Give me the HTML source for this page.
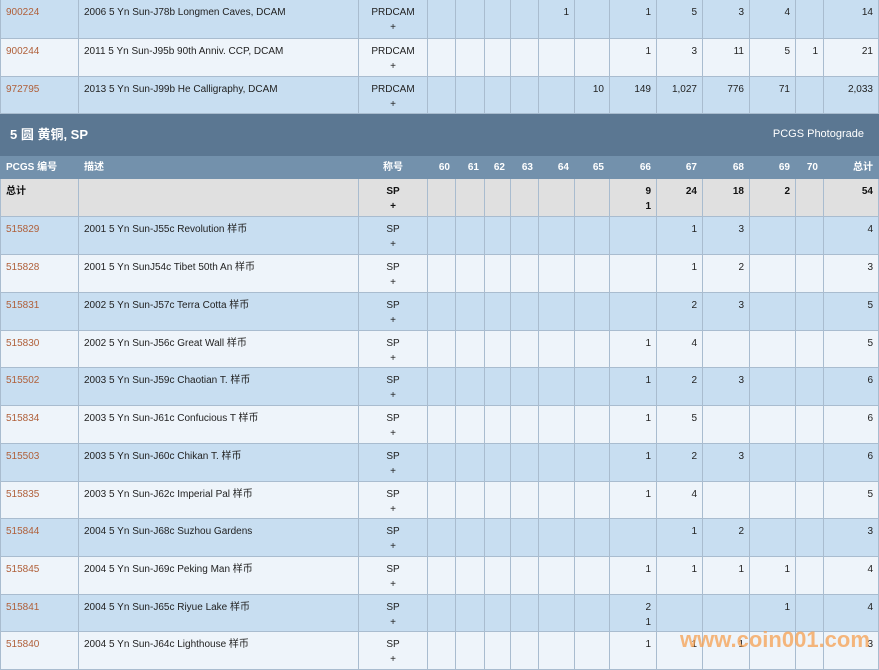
<!DOCTYPE html>
<html><head><meta charset="utf-8"><style>
body{margin:0;background:#fff;width:879px;height:670px;overflow:hidden;font-family:"Liberation Sans","Noto Sans CJK SC",sans-serif;font-size:10px;color:#222;position:relative}
table{border-collapse:collapse;table-layout:fixed;position:absolute;left:0;top:-1px;width:878px}
td{border:1px solid #a9bccf;vertical-align:top;padding:5px 5px 0 5px;line-height:15px;overflow:hidden;white-space:nowrap}
td.n{text-align:right}
td.g{text-align:center}
tr.b td{background:#c8def1}
tr.w td{background:#eef4fa}
tr.t td{background:#e0e0e0;font-weight:bold;color:#111}
a{color:#b0603a;text-decoration:none}
tr.sec td{background:#5b7792;color:#fff;border-color:#5b7792;vertical-align:middle;padding-top:0}
tr.hd td{background:#7391ac;color:#fff;font-weight:bold;border-color:#7391ac;vertical-align:middle;padding-top:0}
.wm{position:absolute;left:680px;top:627px;font:bold 22px "Liberation Sans",sans-serif;color:rgba(245,160,80,0.75);letter-spacing:0}
</style></head><body>
<table>
<colgroup><col style="width:78px"><col style="width:280px"><col style="width:69px"><col style="width:28px"><col style="width:29px"><col style="width:26px"><col style="width:28px"><col style="width:36px"><col style="width:35px"><col style="width:47px"><col style="width:46px"><col style="width:47px"><col style="width:46px"><col style="width:28px"><col style="width:55px"></colgroup>
<tr class="b" style="height:39px"><td><a>900224</a></td><td>2006 5 Yn Sun-J78b Longmen Caves, DCAM</td><td class="g">PRDCAM<br>+</td><td></td><td></td><td></td><td></td><td class="n">1</td><td></td><td class="n">1</td><td class="n">5</td><td class="n">3</td><td class="n">4</td><td></td><td class="n">14</td></tr>
<tr class="w" style="height:38px"><td><a>900244</a></td><td>2011 5 Yn Sun-J95b 90th Anniv. CCP, DCAM</td><td class="g">PRDCAM<br>+</td><td></td><td></td><td></td><td></td><td></td><td></td><td class="n">1</td><td class="n">3</td><td class="n">11</td><td class="n">5</td><td class="n">1</td><td class="n">21</td></tr>
<tr class="b" style="height:37px"><td><a>972795</a></td><td>2013 5 Yn Sun-J99b He Calligraphy, DCAM</td><td class="g">PRDCAM<br>+</td><td></td><td></td><td></td><td></td><td></td><td class="n">10</td><td class="n">149</td><td class="n">1,027</td><td class="n">776</td><td class="n">71</td><td></td><td class="n">2,033</td></tr>
<tr class="sec" style="height:42px"><td colspan="8" style="font-size:13px;font-weight:bold;padding-left:9px">5 圆 黄铜, SP</td><td colspan="7" style="text-align:right;font-size:11px;padding-right:14px">PCGS Photograde</td></tr>
<tr class="hd" style="height:23px"><td>PCGS 编号</td><td>描述</td><td class="g">称号</td><td class="n">60</td><td class="n">61</td><td class="n">62</td><td class="n">63</td><td class="n">64</td><td class="n">65</td><td class="n">66</td><td class="n">67</td><td class="n">68</td><td class="n">69</td><td class="n">70</td><td class="n">总计</td></tr>
<tr class="t" style="height:38px"><td>总计</td><td></td><td class="g">SP<br>+</td><td></td><td></td><td></td><td></td><td></td><td></td><td class="n">9<br>1</td><td class="n">24</td><td class="n">18</td><td class="n">2</td><td></td><td class="n">54</td></tr>
<tr class="b" style="height:38px"><td><a>515829</a></td><td>2001 5 Yn Sun-J55c Revolution 样币</td><td class="g">SP<br>+</td><td></td><td></td><td></td><td></td><td></td><td></td><td></td><td class="n">1</td><td class="n">3</td><td></td><td></td><td class="n">4</td></tr>
<tr class="w" style="height:38px"><td><a>515828</a></td><td>2001 5 Yn SunJ54c Tibet 50th An 样币</td><td class="g">SP<br>+</td><td></td><td></td><td></td><td></td><td></td><td></td><td></td><td class="n">1</td><td class="n">2</td><td></td><td></td><td class="n">3</td></tr>
<tr class="b" style="height:38px"><td><a>515831</a></td><td>2002 5 Yn Sun-J57c Terra Cotta 样币</td><td class="g">SP<br>+</td><td></td><td></td><td></td><td></td><td></td><td></td><td></td><td class="n">2</td><td class="n">3</td><td></td><td></td><td class="n">5</td></tr>
<tr class="w" style="height:37px"><td><a>515830</a></td><td>2002 5 Yn Sun-J56c Great Wall 样币</td><td class="g">SP<br>+</td><td></td><td></td><td></td><td></td><td></td><td></td><td class="n">1</td><td class="n">4</td><td></td><td></td><td></td><td class="n">5</td></tr>
<tr class="b" style="height:38px"><td><a>515502</a></td><td>2003 5 Yn Sun-J59c Chaotian T. 样币</td><td class="g">SP<br>+</td><td></td><td></td><td></td><td></td><td></td><td></td><td class="n">1</td><td class="n">2</td><td class="n">3</td><td></td><td></td><td class="n">6</td></tr>
<tr class="w" style="height:38px"><td><a>515834</a></td><td>2003 5 Yn Sun-J61c Confucious T 样币</td><td class="g">SP<br>+</td><td></td><td></td><td></td><td></td><td></td><td></td><td class="n">1</td><td class="n">5</td><td></td><td></td><td></td><td class="n">6</td></tr>
<tr class="b" style="height:38px"><td><a>515503</a></td><td>2003 5 Yn Sun-J60c Chikan T. 样币</td><td class="g">SP<br>+</td><td></td><td></td><td></td><td></td><td></td><td></td><td class="n">1</td><td class="n">2</td><td class="n">3</td><td></td><td></td><td class="n">6</td></tr>
<tr class="w" style="height:37px"><td><a>515835</a></td><td>2003 5 Yn Sun-J62c Imperial Pal 样币</td><td class="g">SP<br>+</td><td></td><td></td><td></td><td></td><td></td><td></td><td class="n">1</td><td class="n">4</td><td></td><td></td><td></td><td class="n">5</td></tr>
<tr class="b" style="height:38px"><td><a>515844</a></td><td>2004 5 Yn Sun-J68c Suzhou Gardens</td><td class="g">SP<br>+</td><td></td><td></td><td></td><td></td><td></td><td></td><td></td><td class="n">1</td><td class="n">2</td><td></td><td></td><td class="n">3</td></tr>
<tr class="w" style="height:38px"><td><a>515845</a></td><td>2004 5 Yn Sun-J69c Peking Man 样币</td><td class="g">SP<br>+</td><td></td><td></td><td></td><td></td><td></td><td></td><td class="n">1</td><td class="n">1</td><td class="n">1</td><td class="n">1</td><td></td><td class="n">4</td></tr>
<tr class="b" style="height:37px"><td><a>515841</a></td><td>2004 5 Yn Sun-J65c Riyue Lake 样币</td><td class="g">SP<br>+</td><td></td><td></td><td></td><td></td><td></td><td></td><td class="n">2<br>1</td><td></td><td></td><td class="n">1</td><td></td><td class="n">4</td></tr>
<tr class="w" style="height:38px"><td><a>515840</a></td><td>2004 5 Yn Sun-J64c Lighthouse 样币</td><td class="g">SP<br>+</td><td></td><td></td><td></td><td></td><td></td><td></td><td class="n">1</td><td class="n">1</td><td class="n">1</td><td></td><td></td><td class="n">3</td></tr>
</table>
<div class="wm">www.coin001.com</div>
</body></html>
